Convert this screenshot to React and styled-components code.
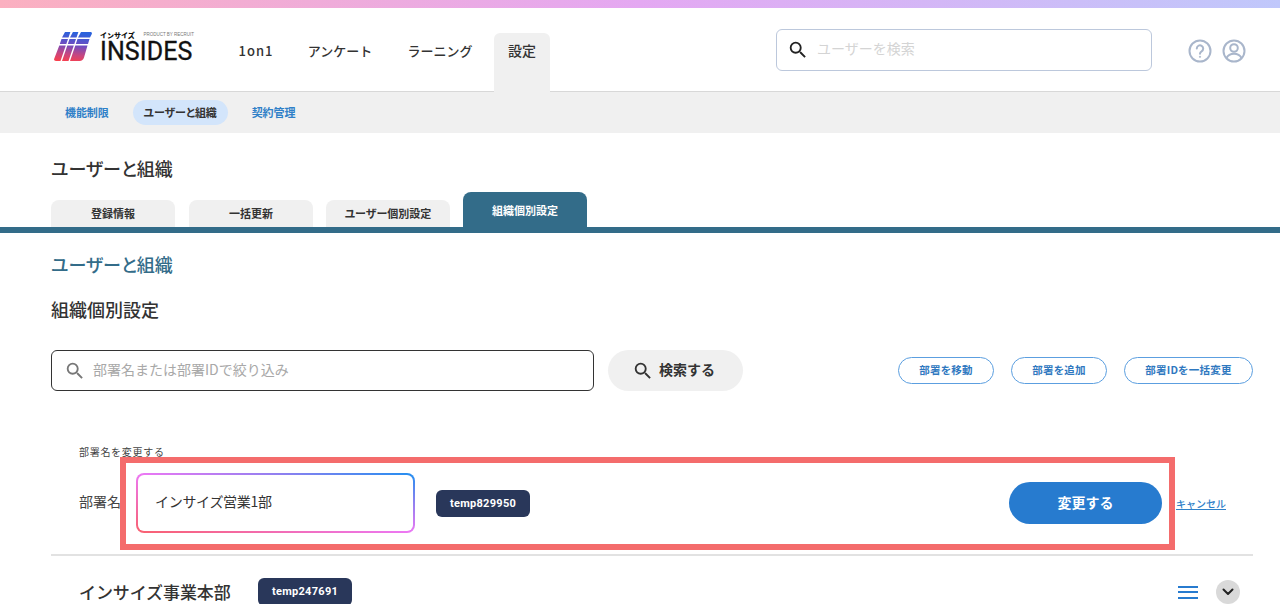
import styled, { createGlobalStyle } from 'styled-components';
import { MdSearch } from 'react-icons/md';

const GlobalStyle = createGlobalStyle`
  html, body {
    margin: 0;
    height: 604px;
    overflow: hidden;
    background: #fff;
    font-family: 'Noto Sans CJK JP', 'Noto Sans', sans-serif;
    color: #333;
  }
  * { box-sizing: border-box; }
`;

const Page = styled.div`
  position: relative;
  width: 1280px;
  height: 604px;
  overflow: hidden;
`;

const TopStripe = styled.div`
  height: 8px;
  background: linear-gradient(90deg, #fbb0c0 0%, #e4a8f2 50%, #c0c8fb 100%);
`;

const Header = styled.header`
  height: 84px;
  display: flex;
  align-items: flex-end;
  padding-left: 54px;
  border-bottom: 1px solid #d8d8d8;
`;

const Logo = styled.div`
  width: 140px;
  height: 42px;
  margin-bottom: 19px;
  display: flex;
  gap: 8px;
  flex: none;
`;

const LogoWords = styled.div`
  display: flex;
  flex-direction: column;
  width: 94px;
  flex: none;
`;

const LogoTop = styled.div`
  display: flex;
  align-items: center;
  justify-content: space-between;
  height: 10px;
`;

const LogoKana = styled.span`
  font-size: 7px;
  font-weight: 900;
  color: #111;
  line-height: 1;
`;

const LogoBy = styled.span`
  font-family: 'Liberation Sans', sans-serif;
  font-size: 4.5px;
  color: #777;
  line-height: 1;
  white-space: nowrap;
`;

const LogoName = styled.span`
  font-family: 'Roboto', sans-serif;
  font-size: 25px;
  font-weight: 400;
  line-height: 24px;
  letter-spacing: 0.1px;
  color: #111;
  -webkit-text-stroke: 0.3px #111;
`;

const MainNav = styled.nav`
  display: flex;
  height: 59px;
  margin-left: 37px;
  margin-bottom: -1px;
  flex: none;
`;

const MainNavItem = styled.div`
  width: ${p => p.$w}px;
  margin-right: ${p => p.$gap || 0}px;
  height: 59px;
  padding-top: ${p => (p.$active ? 7 : 8)}px;
  text-align: center;
  white-space: nowrap;
  font-size: ${p => p.$size || 13}px;
  letter-spacing: ${p => p.$ls || 0}px;
  line-height: 20px;
  font-weight: 500;
  color: #333;
  border-radius: 6px 6px 0 0;
  background: ${p => (p.$active ? '#f0f0f0' : 'transparent')};
`;

const HeaderSearch = styled.div`
  width: 376px;
  height: 42px;
  margin-left: 226px;
  margin-bottom: 20px;
  border: 1px solid #bcc8dc;
  border-radius: 6px;
  display: flex;
  align-items: center;
  padding-left: 10px;
  gap: 8px;
  font-size: 14px;
  color: #d4d4d4;
  flex: none;
`;

const PlaceholderText = styled.span`
  margin-bottom: 4px;
`;

const HeaderIcons = styled.div`
  display: flex;
  gap: 10px;
  margin-left: 36px;
  margin-bottom: 28px;
`;

const SubNav = styled.nav`
  height: 41px;
  background: #f0f0f0;
  display: flex;
  align-items: center;
  padding-left: 54px;
  gap: 13px;
`;

const SubNavItem = styled.div`
  height: 25px;
  padding: 0 11px;
  border-radius: 13px;
  font-size: 11px;
  line-height: 25px;
  font-weight: 700;
  letter-spacing: -0.1px;
  font-feature-settings: 'palt';
  color: ${p => (p.$active ? '#333' : '#2f80c8')};
  background: ${p => (p.$active ? '#d3e5fb' : 'transparent')};
`;

const PageTitle = styled.h1`
  margin: 0;
  padding: 25px 0 0 51px;
  height: 59px;
  font-size: 18px;
  line-height: 20px;
  font-weight: 500;
  font-feature-settings: 'palt';
  color: #333;
`;

const TabBar = styled.div`
  height: 41px;
  border-bottom: 6px solid #336c89;
  display: flex;
  align-items: flex-end;
  gap: 13px;
  padding-left: 51px;
`;

const Tab = styled.div`
  width: 124px;
  height: ${p => (p.$active ? 35 : 27)}px;
  margin-right: ${p => p.$mr || 0}px;
  border-radius: 8px 8px 0 0;
  background: ${p => (p.$active ? '#336c89' : '#f0f0f0')};
  color: ${p => (p.$active ? '#fff' : '#333')};
  font-size: 11px;
  font-weight: 700;
  line-height: 25px;
  padding-top: ${p => (p.$active ? 6 : 1)}px;
  text-align: center;
  font-feature-settings: 'palt';
`;

const Content = styled.main`
  padding: 0 27px 0 51px;
`;

const Crumb = styled.div`
  padding-top: 21px;
  height: 66px;
  font-size: 18px;
  line-height: 20px;
  font-weight: 500;
  font-feature-settings: 'palt';
  color: #336c89;
`;

const SectionTitle = styled.h2`
  margin: 0;
  height: 51px;
  font-size: 18px;
  line-height: 20px;
  font-weight: 500;
  color: #333;
`;

const SearchRow = styled.div`
  display: flex;
  align-items: center;
  height: 41px;
`;

const FilterBox = styled.div`
  width: 543px;
  height: 41px;
  border: 1px solid #333;
  border-radius: 6px;
  display: flex;
  align-items: center;
  gap: 7px;
  padding-left: 12px;
  font-size: 14px;
  color: #a8a8a8;
`;

const SearchButton = styled.div`
  width: 135px;
  height: 41px;
  margin-left: 14px;
  padding-right: 4px;
  border-radius: 21px;
  background: #f0f0f0;
  display: flex;
  align-items: center;
  justify-content: center;
  gap: 5px;
  font-size: 14px;
  font-weight: 700;
  color: #333;
`;

const OutlineGroup = styled.div`
  margin-left: auto;
  display: flex;
  gap: 17px;
`;

const OutlineButton = styled.div`
  width: ${p => p.$w}px;
  height: 27px;
  border: 1.5px solid #5c9fe0;
  border-radius: 14px;
  font-size: 10.5px;
  line-height: 24px;
  font-weight: 700;
  letter-spacing: 0.2px;
  text-align: center;
  color: #2f78bf;
`;

const EditLabel = styled.div`
  margin: 54px 0 0 28px;
  font-size: 10px;
  line-height: 14px;
  letter-spacing: 0.7px;
  color: #444;
`;

const EditRow = styled.div`
  display: flex;
  align-items: center;
  height: 60px;
  margin-top: 14px;
  padding-left: 28px;
`;

const FieldLabel = styled.span`
  width: 57px;
  margin-bottom: 4px;
  font-size: 14px;
  color: #444;
`;

const GradientInput = styled.div`
  width: 279px;
  height: 60px;
  padding: 2px;
  border-radius: 8px;
  background: linear-gradient(to top right, #f9606e 0%, #ec78f4 50%, #8f80f0 75%, #1f8ff0 100%);
`;

const GradientInner = styled.div`
  height: 100%;
  border-radius: 6px;
  background: #fff;
  padding-left: 17px;
  font-size: 14px;
  line-height: 52px;
  letter-spacing: -0.3px;
  color: #333;
`;

const IdBadge = styled.div`
  width: 94px;
  height: 27px;
  border-radius: 6px;
  background: #29375a;
  color: #fff;
  font-family: 'Roboto', sans-serif;
  font-size: 11px;
  font-weight: 700;
  line-height: 27px;
  letter-spacing: 0.3px;
  text-align: center;
  flex: none;
`;

const EditBadge = styled(IdBadge)`
  margin-left: 21px;
`;

const PrimaryButton = styled.div`
  width: 153px;
  height: 42px;
  margin-left: auto;
  border-radius: 21px;
  background: #277bcf;
  color: #fff;
  font-size: 14px;
  font-weight: 700;
  line-height: 40px;
  text-align: center;
`;

const CancelLink = styled.a`
  width: 49px;
  margin: 0 28px 0 14px;
  font-size: 10px;
  font-weight: 500;
  color: #2f80c8;
  text-decoration: underline;
  white-space: nowrap;
`;

const Divider = styled.div`
  height: 2px;
  margin-top: 21px;
  background: #e2e2e2;
`;

const DeptRow = styled.div`
  display: flex;
  align-items: flex-start;
  padding: 22px 13px 0 28px;
`;

const DeptName = styled.span`
  width: 179px;
  font-size: 17px;
  line-height: 28px;
  font-weight: 500;
  letter-spacing: -0.1px;
  color: #333;
`;

const DeptBadge = styled(IdBadge)`
  height: 28px;
  line-height: 28px;
`;

const DeptActions = styled.div`
  margin-left: auto;
  display: flex;
  align-items: center;
  gap: 18px;
  padding-top: 2px;
`;

const Hamburger = styled.div`
  width: 20px;
  height: 13px;
  border-top: 2px solid #277bcf;
  border-bottom: 2px solid #277bcf;
  position: relative;
  &::after {
    content: '';
    position: absolute;
    left: 0;
    right: 0;
    top: 3.5px;
    height: 2px;
    background: #277bcf;
  }
`;

const ChevronCircle = styled.div`
  width: 24px;
  height: 24px;
  border-radius: 50%;
  background: #d9d9d9;
  display: flex;
  align-items: center;
  justify-content: center;
`;

// annotation drawn over the screenshot, not part of the app
const Highlight = styled.div`
  position: absolute;
  left: 120px;
  top: 457px;
  width: 1055px;
  height: 93px;
  border: 6px solid #f46c6c;
  pointer-events: none;
`;

function LogoMark() {
  return (
    <svg width="38" height="29" viewBox="0 0 38 29" style={{ marginTop: 2, flex: 'none' }}>
      <defs>
        <linearGradient id="logoGrad" x1="0.35" y1="0" x2="0.2" y2="1">
          <stop offset="0" stopColor="#2b62dc" />
          <stop offset="0.42" stopColor="#6f4cc0" />
          <stop offset="0.75" stopColor="#c8467f" />
          <stop offset="1" stopColor="#f8404e" />
        </linearGradient>
      </defs>
      <path
        fill="url(#logoGrad)"
        d="M11 0h5.400L14.500 5.500H8zM18.900 0h5.500l-1.900 5.500H16zM27 0h9c1.500 0 2.300 .8 1.800 2L36 5.500H24zM7.500 7H14l-1.700 5H5.800zM15.500 7H22l-1.700 5h-6.500zM23.500 7h12L34 12H21.800zM5.300 13.500h6.500L6.500 29H2c-1.500 0-2.300-.8-1.800-2.200zM13.300 13.500h6.500L14.500 29H8zM21.300 13.500h12.200L30 25.500c-.7 2.300-2 3.500-4.500 3.500H16z"
      />
    </svg>
  );
}

function QuestionIcon() {
  return (
    <svg width="24" height="24" viewBox="0 0 24 24" fill="none" stroke="#a9b6cb" strokeWidth="2">
      <circle cx="12" cy="12" r="10.5" />
      <path d="M8.8 9.5a3.2 3.2 0 1 1 4.800 2.800c-1 .6-1.600 1.200-1.600 2.400" strokeLinecap="round" />
      <circle cx="12" cy="17.8" r="0.6" fill="#a9b6cb" strokeWidth="1" />
    </svg>
  );
}

function UserIcon() {
  return (
    <svg width="24" height="24" viewBox="0 0 24 24" fill="none" stroke="#a9b6cb" strokeWidth="2">
      <circle cx="12" cy="12" r="10.5" />
      <circle cx="12" cy="9" r="3.8" />
      <path d="M4.5 19c1.500-3 4.200-4.300 7.500-4.300s6 1.300 7.500 4.300" />
    </svg>
  );
}

function Chevron() {
  return (
    <svg width="12" height="8" viewBox="0 0 12 8" fill="none" stroke="#222" strokeWidth="2" strokeLinecap="round" strokeLinejoin="round">
      <path d="M1.5 1.500L6 6l4.500-4.500" />
    </svg>
  );
}

export default function App() {
  return (
    <Page>
      <GlobalStyle />
      <TopStripe />
      <Header>
        <Logo>
          <LogoMark />
          <LogoWords>
            <LogoTop>
              <LogoKana>インサイズ</LogoKana>
              <LogoBy>PRODUCT BY RECRUIT</LogoBy>
            </LogoTop>
            <LogoName>INSIDES</LogoName>
          </LogoWords>
        </Logo>
        <MainNav>
          <MainNavItem $w={50} $gap={26} $ls={1}>1on1</MainNavItem>
          <MainNavItem $w={66} $gap={34}>アンケート</MainNavItem>
          <MainNavItem $w={66} $gap={21}>ラーニング</MainNavItem>
          <MainNavItem $w={56} $size={14} $active>設定</MainNavItem>
        </MainNav>
        <HeaderSearch>
          <MdSearch size={22} color="#222" />
          <PlaceholderText>ユーザーを検索</PlaceholderText>
        </HeaderSearch>
        <HeaderIcons>
          <QuestionIcon />
          <UserIcon />
        </HeaderIcons>
      </Header>
      <SubNav>
        <SubNavItem>機能制限</SubNavItem>
        <SubNavItem $active>ユーザーと組織</SubNavItem>
        <SubNavItem>契約管理</SubNavItem>
      </SubNav>
      <PageTitle>ユーザーと組織</PageTitle>
      <TabBar>
        <Tab $mr={1}>登録情報</Tab>
        <Tab>一括更新</Tab>
        <Tab>ユーザー個別設定</Tab>
        <Tab $active>組織個別設定</Tab>
      </TabBar>
      <Content>
        <Crumb>ユーザーと組織</Crumb>
        <SectionTitle>組織個別設定</SectionTitle>
        <SearchRow>
          <FilterBox>
            <MdSearch size={22} color="#777" />
            <PlaceholderText>部署名または部署IDで絞り込み</PlaceholderText>
          </FilterBox>
          <SearchButton>
            <MdSearch size={22} color="#333" />
            <PlaceholderText>検索する</PlaceholderText>
          </SearchButton>
          <OutlineGroup>
            <OutlineButton $w={96}>部署を移動</OutlineButton>
            <OutlineButton $w={96}>部署を追加</OutlineButton>
            <OutlineButton $w={129}>部署IDを一括変更</OutlineButton>
          </OutlineGroup>
        </SearchRow>
        <EditLabel>部署名を変更する</EditLabel>
        <EditRow>
          <FieldLabel>部署名</FieldLabel>
          <GradientInput>
            <GradientInner>インサイズ営業1部</GradientInner>
          </GradientInput>
          <EditBadge>temp829950</EditBadge>
          <PrimaryButton>変更する</PrimaryButton>
          <CancelLink>キャンセル</CancelLink>
        </EditRow>
        <Divider />
        <DeptRow>
          <DeptName>インサイズ事業本部</DeptName>
          <DeptBadge>temp247691</DeptBadge>
          <DeptActions>
            <Hamburger />
            <ChevronCircle>
              <Chevron />
            </ChevronCircle>
          </DeptActions>
        </DeptRow>
      </Content>
      <Highlight />
    </Page>
  );
}
